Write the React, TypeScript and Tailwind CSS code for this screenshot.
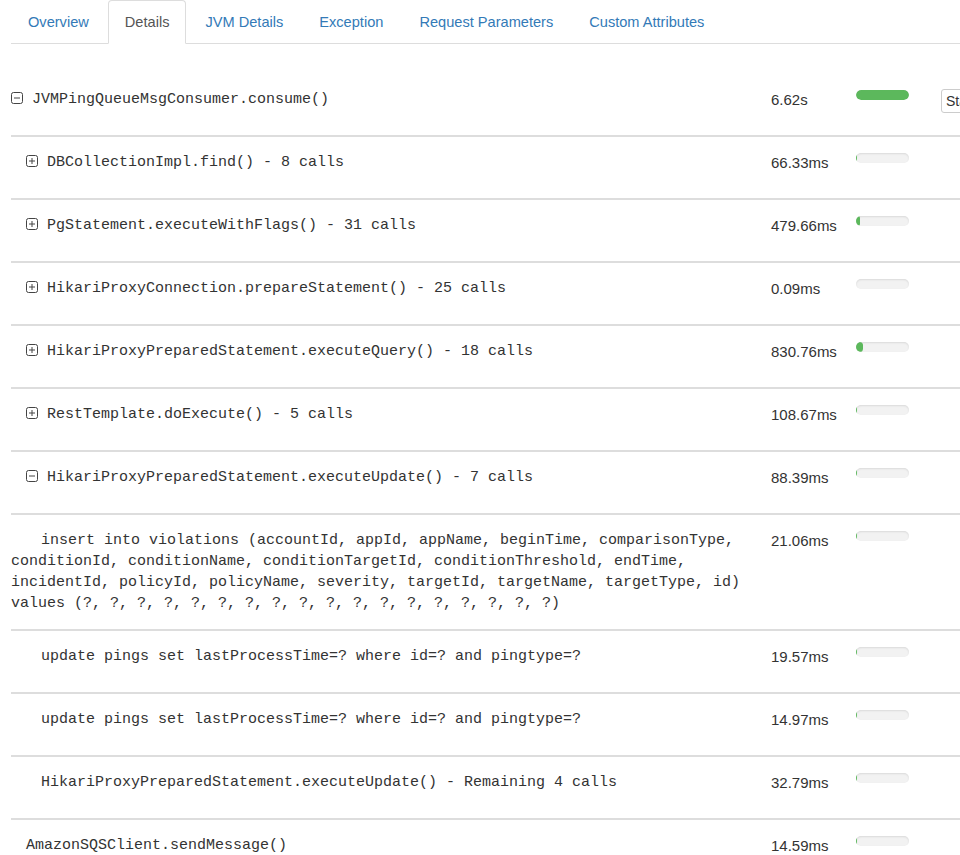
import React from "react";

type Row = {
  level: 0 | 1 | 2;
  icon?: "plus" | "minus";
  text: string;
  time: string;
  ms: number;
  button?: boolean;
};

const TOTAL = 6620;

const rows: Row[] = [
  { level: 0, icon: "minus", text: "JVMPingQueueMsgConsumer.consume()", time: "6.62s", ms: 6620, button: true },
  { level: 1, icon: "plus", text: "DBCollectionImpl.find() - 8 calls", time: "66.33ms", ms: 66.33 },
  { level: 1, icon: "plus", text: "PgStatement.executeWithFlags() - 31 calls", time: "479.66ms", ms: 479.66 },
  { level: 1, icon: "plus", text: "HikariProxyConnection.prepareStatement() - 25 calls", time: "0.09ms", ms: 0.09 },
  { level: 1, icon: "plus", text: "HikariProxyPreparedStatement.executeQuery() - 18 calls", time: "830.76ms", ms: 830.76 },
  { level: 1, icon: "plus", text: "RestTemplate.doExecute() - 5 calls", time: "108.67ms", ms: 108.67 },
  { level: 1, icon: "minus", text: "HikariProxyPreparedStatement.executeUpdate() - 7 calls", time: "88.39ms", ms: 88.39 },
  {
    level: 2,
    text: "insert into violations (accountId, appId, appName, beginTime, comparisonType, conditionId, conditionName, conditionTargetId, conditionThreshold, endTime, incidentId, policyId, policyName, severity, targetId, targetName, targetType, id) values (?, ?, ?, ?, ?, ?, ?, ?, ?, ?, ?, ?, ?, ?, ?, ?, ?, ?)",
    time: "21.06ms",
    ms: 21.06,
  },
  { level: 2, text: "update pings set lastProcessTime=? where id=? and pingtype=?", time: "19.57ms", ms: 19.57 },
  { level: 2, text: "update pings set lastProcessTime=? where id=? and pingtype=?", time: "14.97ms", ms: 14.97 },
  { level: 2, text: "HikariProxyPreparedStatement.executeUpdate() - Remaining 4 calls", time: "32.79ms", ms: 32.79 },
  { level: 1, text: "AmazonSQSClient.sendMessage()", time: "14.59ms", ms: 14.59 },
];

const indentClass: Record<number, string> = {
  0: "indent-0",
  1: "indent-[15px]",
  2: "indent-[30px]",
};

function ToggleIcon({ kind }: { kind: "plus" | "minus" }) {
  return (
    <svg
      width="12"
      height="12"
      viewBox="0 0 12 12"
      className="inline-block mr-[9px] align-[-1px]"
      fill="none"
      stroke="#444"
      strokeWidth="1"
    >
      <rect x="0.5" y="0.5" width="11" height="11" rx="2" />
      <line x1="3" y1="6" x2="9" y2="6" />
      {kind === "plus" && <line x1="6" y1="3" x2="6" y2="9" />}
    </svg>
  );
}

const tabs = ["Overview", "Details", "JVM Details", "Exception", "Request Parameters", "Custom Attributes"];

export default function App() {
  return (
    <div className="w-[960px] h-[855px] overflow-hidden bg-white text-[#333] font-['Liberation_Sans',Arial,sans-serif]">
      <ul className="ml-[11px] flex border-b border-[#ddd] w-[1100px]">
        {tabs.map((t) =>
          t === "Details" ? (
            <li key={t} className="mr-[2px] -mb-px">
              <div className="px-4 pt-[11px] pb-[10px] leading-[21px] text-[14.6px] text-[#555] bg-white border border-[#ddd] border-b-transparent rounded-t-[4px]">
                {t}
              </div>
            </li>
          ) : (
            <li key={t} className="mr-[2px] -mb-px">
              <div className="px-4 pt-[11px] pb-[10px] leading-[21px] text-[14.6px] text-[#337ab7] border border-transparent">
                {t}
              </div>
            </li>
          )
        )}
      </ul>

      <div className="mt-[30px] ml-[11px] w-[1100px]">
        {rows.map((r, i) => (
          <div key={i} className="flex min-h-[63px] pt-[15px] pb-[15px] border-b-2 border-[#ddd]">
            <div className="w-[760px] shrink-0 pr-[15px]">
              <div
                className={`${indentClass[r.level]} font-['Liberation_Mono','Courier_New',monospace] text-[15px] leading-[21px] text-[#333]`}
              >
                {r.icon && <ToggleIcon kind={r.icon} />}
                {r.text}
              </div>
            </div>
            <div className="w-[85px] shrink-0 text-[15px] leading-[21px] text-[#333]">{r.time}</div>
            <div className="w-[85px] shrink-0 pt-[1px]">
              <div className="w-[53px] h-[10px] rounded-full bg-[#f2f2f2] shadow-[inset_0_1px_2px_rgba(0,0,0,0.1)] overflow-hidden">
                <div
                  className="h-full bg-[#5cb85c] rounded-full"
                  style={{ width: `${(r.ms / TOTAL) * 100}%` }}
                />
              </div>
            </div>
            <div className="shrink-0">
              {r.button && (
                <button className="h-[24px] px-[4px] border border-[#ccc] rounded-[3px] bg-white text-[14px] text-[#333] leading-[22px]">
                  Stack trace
                </button>
              )}
            </div>
          </div>
        ))}
      </div>
    </div>
  );
}
